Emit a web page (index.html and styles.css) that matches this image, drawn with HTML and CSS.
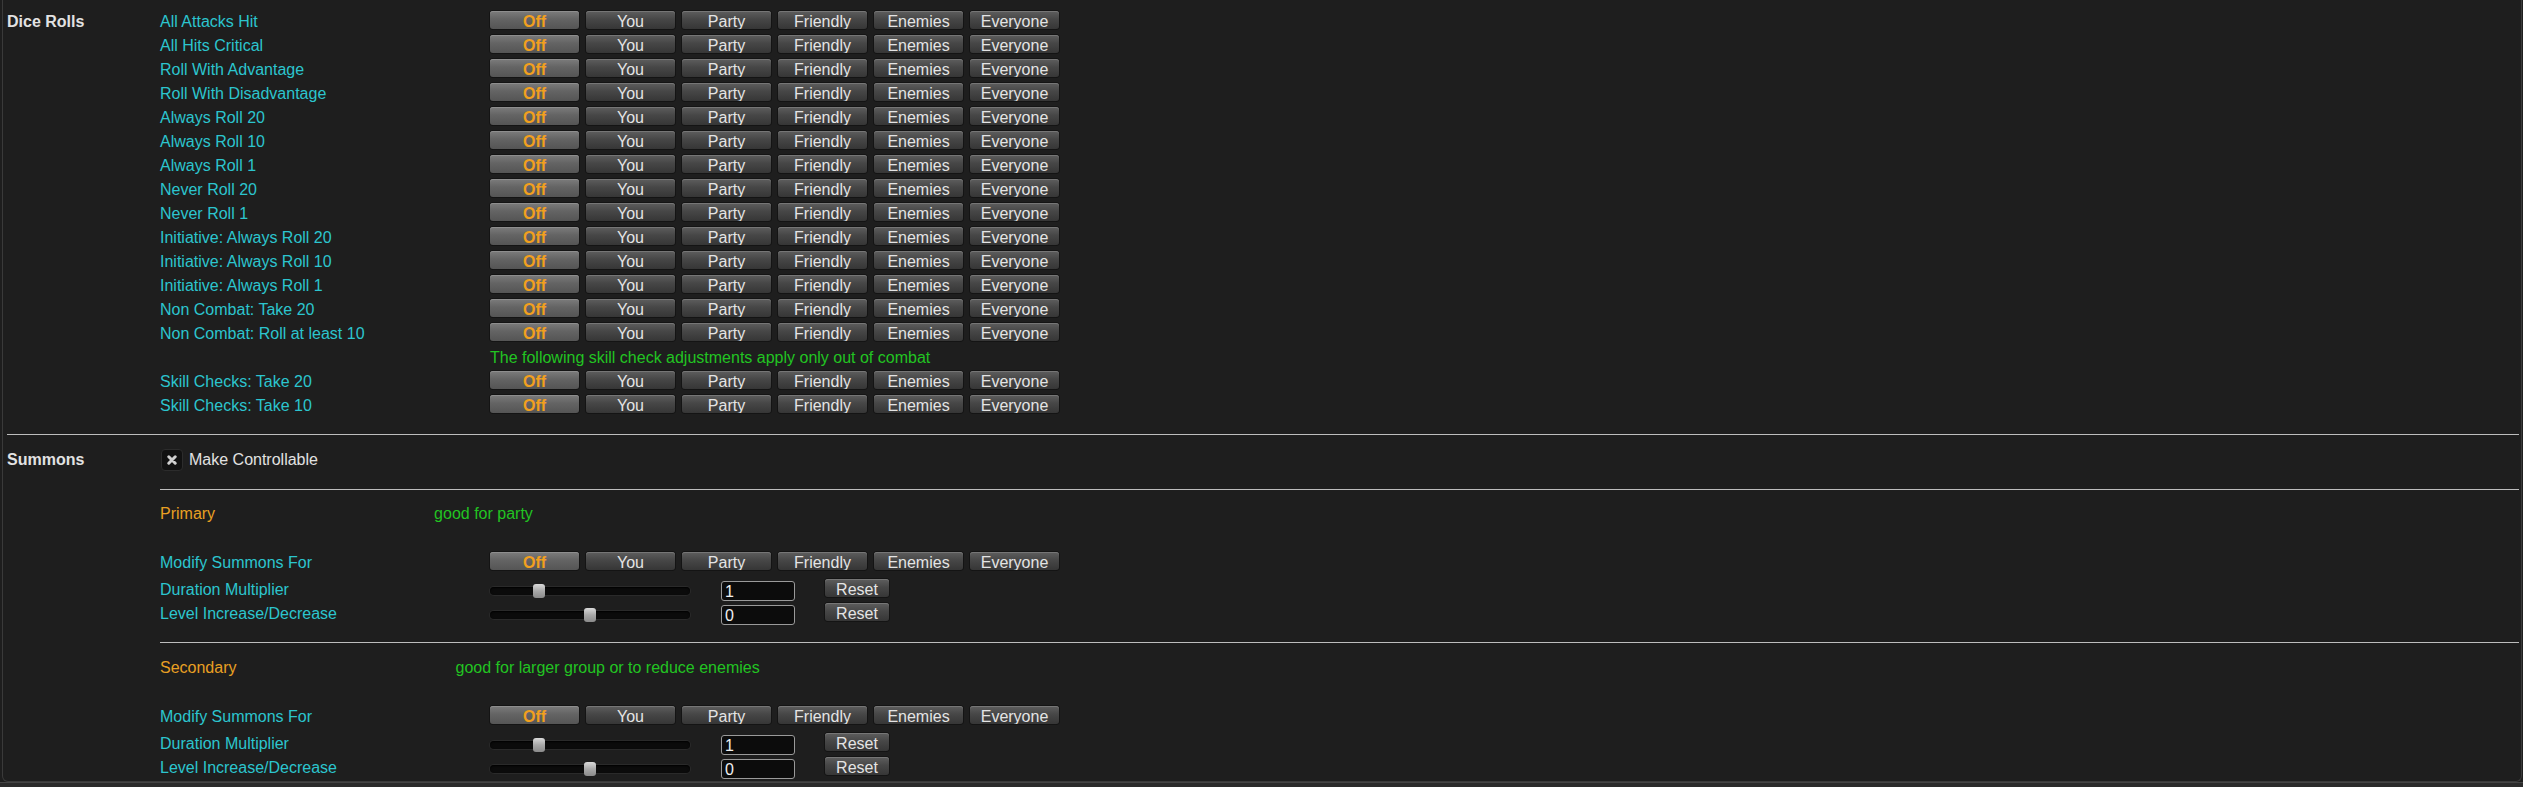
FILE: index.html
```html
<!DOCTYPE html>
<html>
<head>
<meta charset="utf-8">
<link rel="stylesheet" href="styles.css">
</head>
<body>
<div class="panel">
  <div class="section">
    <div class="section-title">Dice Rolls</div>
    <div class="content">
      <div class="row"><div class="label">All Attacks Hit</div><div class="btns"><div class="btn on">Off</div><div class="btn">You</div><div class="btn">Party</div><div class="btn">Friendly</div><div class="btn">Enemies</div><div class="btn">Everyone</div></div></div>
      <div class="row"><div class="label">All Hits Critical</div><div class="btns"><div class="btn on">Off</div><div class="btn">You</div><div class="btn">Party</div><div class="btn">Friendly</div><div class="btn">Enemies</div><div class="btn">Everyone</div></div></div>
      <div class="row"><div class="label">Roll With Advantage</div><div class="btns"><div class="btn on">Off</div><div class="btn">You</div><div class="btn">Party</div><div class="btn">Friendly</div><div class="btn">Enemies</div><div class="btn">Everyone</div></div></div>
      <div class="row"><div class="label">Roll With Disadvantage</div><div class="btns"><div class="btn on">Off</div><div class="btn">You</div><div class="btn">Party</div><div class="btn">Friendly</div><div class="btn">Enemies</div><div class="btn">Everyone</div></div></div>
      <div class="row"><div class="label">Always Roll 20</div><div class="btns"><div class="btn on">Off</div><div class="btn">You</div><div class="btn">Party</div><div class="btn">Friendly</div><div class="btn">Enemies</div><div class="btn">Everyone</div></div></div>
      <div class="row"><div class="label">Always Roll 10</div><div class="btns"><div class="btn on">Off</div><div class="btn">You</div><div class="btn">Party</div><div class="btn">Friendly</div><div class="btn">Enemies</div><div class="btn">Everyone</div></div></div>
      <div class="row"><div class="label">Always Roll 1</div><div class="btns"><div class="btn on">Off</div><div class="btn">You</div><div class="btn">Party</div><div class="btn">Friendly</div><div class="btn">Enemies</div><div class="btn">Everyone</div></div></div>
      <div class="row"><div class="label">Never Roll 20</div><div class="btns"><div class="btn on">Off</div><div class="btn">You</div><div class="btn">Party</div><div class="btn">Friendly</div><div class="btn">Enemies</div><div class="btn">Everyone</div></div></div>
      <div class="row"><div class="label">Never Roll 1</div><div class="btns"><div class="btn on">Off</div><div class="btn">You</div><div class="btn">Party</div><div class="btn">Friendly</div><div class="btn">Enemies</div><div class="btn">Everyone</div></div></div>
      <div class="row"><div class="label">Initiative: Always Roll 20</div><div class="btns"><div class="btn on">Off</div><div class="btn">You</div><div class="btn">Party</div><div class="btn">Friendly</div><div class="btn">Enemies</div><div class="btn">Everyone</div></div></div>
      <div class="row"><div class="label">Initiative: Always Roll 10</div><div class="btns"><div class="btn on">Off</div><div class="btn">You</div><div class="btn">Party</div><div class="btn">Friendly</div><div class="btn">Enemies</div><div class="btn">Everyone</div></div></div>
      <div class="row"><div class="label">Initiative: Always Roll 1</div><div class="btns"><div class="btn on">Off</div><div class="btn">You</div><div class="btn">Party</div><div class="btn">Friendly</div><div class="btn">Enemies</div><div class="btn">Everyone</div></div></div>
      <div class="row"><div class="label">Non Combat: Take 20</div><div class="btns"><div class="btn on">Off</div><div class="btn">You</div><div class="btn">Party</div><div class="btn">Friendly</div><div class="btn">Enemies</div><div class="btn">Everyone</div></div></div>
      <div class="row"><div class="label">Non Combat: Roll at least 10</div><div class="btns"><div class="btn on">Off</div><div class="btn">You</div><div class="btn">Party</div><div class="btn">Friendly</div><div class="btn">Enemies</div><div class="btn">Everyone</div></div></div>
      <div class="row"><div class="label"></div><div class="note">The following skill check adjustments apply only out of combat</div></div>
      <div class="row"><div class="label">Skill Checks: Take 20</div><div class="btns"><div class="btn on">Off</div><div class="btn">You</div><div class="btn">Party</div><div class="btn">Friendly</div><div class="btn">Enemies</div><div class="btn">Everyone</div></div></div>
      <div class="row"><div class="label">Skill Checks: Take 10</div><div class="btns"><div class="btn on">Off</div><div class="btn">You</div><div class="btn">Party</div><div class="btn">Friendly</div><div class="btn">Enemies</div><div class="btn">Everyone</div></div></div>
    </div>
  </div>

  <div class="divider"></div>

  <div class="section">
    <div class="section-title summons-title">Summons</div>
    <div class="content">
      <div class="row check-row">
        <div class="checkbox"><svg width="10" height="10" viewBox="0 0 10 10"><path d="M1.8 1.8 L8.2 8.2 M8.2 1.8 L1.8 8.2" stroke="#cfcfcf" stroke-width="3" stroke-linecap="round"/></svg></div>
        <div class="check-label">Make Controllable</div>
      </div>

      <div class="divider sub"></div>

      <div class="block">
        <div class="row"><div class="sub-title">Primary</div><div class="hint">good for party</div></div>
        <div class="row gap-big"><div class="label">Modify Summons For</div><div class="btns"><div class="btn on">Off</div><div class="btn">You</div><div class="btn">Party</div><div class="btn">Friendly</div><div class="btn">Enemies</div><div class="btn">Everyone</div></div></div>
        <div class="row gap-small"><div class="label">Duration Multiplier</div><div class="slider"><div class="handle" style="left:43px"></div></div><input class="num" type="text" value="1" readonly><div class="btn reset">Reset</div></div>
        <div class="row"><div class="label">Level Increase/Decrease</div><div class="slider"><div class="handle" style="left:94px"></div></div><input class="num" type="text" value="0" readonly><div class="btn reset">Reset</div></div>
      </div>

      <div class="divider sub second"></div>

      <div class="block">
        <div class="row"><div class="sub-title">Secondary</div><div class="hint">good for larger group or to reduce enemies</div></div>
        <div class="row gap-big"><div class="label">Modify Summons For</div><div class="btns"><div class="btn on">Off</div><div class="btn">You</div><div class="btn">Party</div><div class="btn">Friendly</div><div class="btn">Enemies</div><div class="btn">Everyone</div></div></div>
        <div class="row gap-small"><div class="label">Duration Multiplier</div><div class="slider"><div class="handle" style="left:43px"></div></div><input class="num" type="text" value="1" readonly><div class="btn reset">Reset</div></div>
        <div class="row"><div class="label">Level Increase/Decrease</div><div class="slider"><div class="handle" style="left:94px"></div></div><input class="num" type="text" value="0" readonly><div class="btn reset">Reset</div></div>
      </div>
    </div>
  </div>
</div>
<div class="footer"></div>
</body>
</html>
```

FILE: styles.css
```css
* { box-sizing: border-box; }

html, body {
  margin: 0;
  padding: 0;
  background: #1e1e1e;
}

body {
  width: 2523px;
  height: 787px;
  overflow: hidden;
  font-family: "Liberation Sans", Arial, sans-serif;
  font-size: 16px;
  line-height: 24px;
  color: #dedede;
}

.panel {
  margin-left: 2px;
  width: 2520px;
  border: 1px solid #3a3a3a;
  border-top: none;
  border-radius: 0 0 6px 6px;
  padding: 10px 2px 1px 4px;
  background: #1e1e1e;
}

.section {
  display: grid;
  grid-template-columns: 153px 1fr;
}

.section-title {
  font-weight: bold;
  color: #e2e2e2;
  line-height: 24px;
}

.summons-title {
  padding-top: 1px;
}

.row {
  display: flex;
  align-items: flex-start;
  height: 24px;
}

.label {
  width: 330px;
  flex: none;
  color: #2cc5ce;
  white-space: nowrap;
}

.note {
  color: #22c422;
  white-space: nowrap;
}

.btns {
  display: flex;
  gap: 7px;
  margin-top: 1px;
}

.btn {
  width: 89px;
  height: 18px;
  line-height: 21px;
  text-align: center;
  border-radius: 3px;
  background: linear-gradient(#5e5e5e 0%, #474747 45%, #363636 100%);
  box-shadow: inset 0 1px 0 #767676, 0 0 0 1px #141414;
  color: #e4e4e4;
  overflow: hidden;
  white-space: nowrap;
}

.btn.on {
  background: linear-gradient(#7c7c7c 0%, #646464 45%, #555555 100%);
  box-shadow: inset 0 1px 0 #8e8e8e, 0 0 0 1px #141414;
  color: #f2a01e;
  font-weight: bold;
}

.divider {
  height: 1px;
  background: #bdbdbd;
  margin: 16px 0 12px;
}

.divider.sub {
  margin: 17px 0 12px;
}

.divider.sub.second {
  margin: 16px 0 13px;
}

.check-row {
  align-items: center;
  margin-top: 1px;
}

.checkbox {
  width: 22px;
  height: 22px;
  margin-left: 1px;
  border-radius: 4px;
  background: #111111;
  border: 1px solid #2c2c2c;
  display: flex;
  align-items: center;
  justify-content: center;
}

.check-label {
  margin-left: 6px;
  color: #e2e2e2;
}

.sub-title {
  color: #e9a023;
}

.hint {
  margin-left: 219px;
  color: #22c422;
  white-space: nowrap;
}

.gap-big {
  margin-top: 25px;
}

.gap-small {
  margin-top: 3px;
}

.slider {
  position: relative;
  width: 200px;
  height: 8px;
  margin-top: 9px;
  border-radius: 4px;
  background: #0b0b0b;
  box-shadow: inset 0 1px 2px #000, 0 0 0 1px #2a2a2a;
}

.handle {
  position: absolute;
  top: -3px;
  width: 12px;
  height: 14px;
  border-radius: 3px;
  background: linear-gradient(#dadada, #a8a8a8 50%, #8a8a8a);
}

.num {
  width: 74px;
  height: 20px;
  margin: 3px 0 0 31px;
  padding: 2px 0 0 3px;
  border: 1px solid #9a9a9a;
  border-radius: 3px;
  background: #0c0c0c;
  color: #f0f0f0;
  font-family: "Liberation Sans", Arial, sans-serif;
  font-size: 16px;
  line-height: 16px;
  outline: none;
}

.btn.reset {
  width: 64px;
  margin: 1px 0 0 30px;
}

.footer {
  height: 5px;
  background: #2b2b2b;
  border-top: 1px solid #444;
}
```
